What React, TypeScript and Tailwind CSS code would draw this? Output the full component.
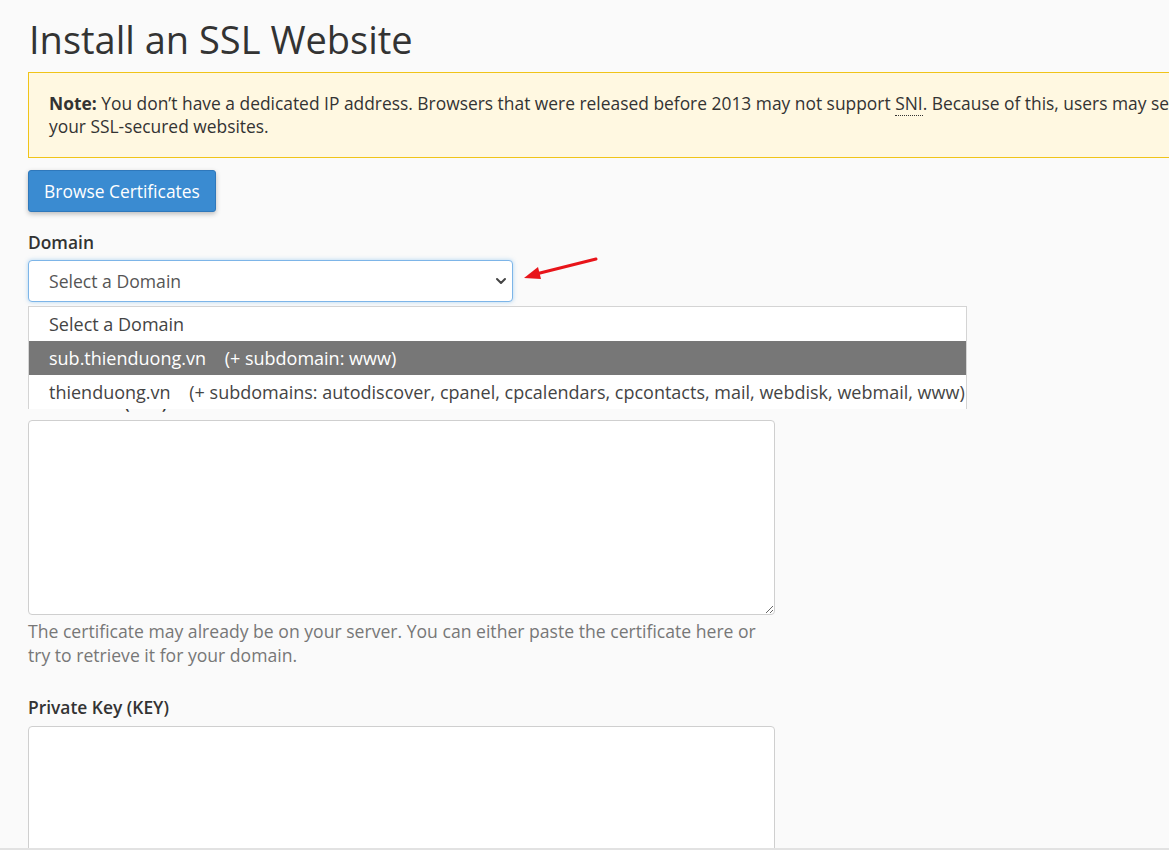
import React from "react";

export default function App() {
  return (
    <div
      className="w-full h-[850px] overflow-hidden bg-[#fafafa] text-[#333] border-b-2 border-[#e2e2e2]"
      style={{ fontFamily: '"Open Sans", "Noto Sans", sans-serif' }}
    >
      <div className="pl-[28px] pt-[14px] w-[1600px]">
        <h1 className="text-[38px] leading-[50px] font-normal text-[#333] pl-px">
          Install an SSL Website
        </h1>
        <div className="mt-[8px] w-[1400px] border border-[#f0c419] bg-[#fff8e1] px-[20px] py-[19px] text-[17.4px] leading-[23px] text-[#333]">
          <div className="whitespace-nowrap">
            <strong className="font-bold">Note:</strong> You don’t have a dedicated IP address. Browsers that were released
            before 2013 may not support{" "}
            <abbr className="no-underline border-b border-dotted border-[#333]" title="Server Name Indication">
              SNI
            </abbr>
            . Because of this, users may see certificate warnings when they access
          </div>
          <div>your SSL-secured websites.</div>
        </div>
        <button className="mt-[12px] h-[42px] w-[188px] rounded-[3px] border border-[#2f78bb] bg-[#3a8bd1] text-[17.4px] text-white shadow-[0_2px_5px_rgba(0,0,0,0.25)]">
          Browse Certificates
        </button>
        <div className="mt-[19px] text-[17.4px] font-semibold leading-[22px]">Domain</div>
        <div className="relative mt-[7px]">
          <div className="flex h-[42px] w-[485px] items-center justify-between rounded-[4px] border border-[#7db5e8] bg-white pl-[20px] pr-[5px] text-[17.6px] text-[#555] shadow-[0_0_4px_rgba(102,175,233,0.5)]">
            <span>Select a Domain</span>
            <svg width="12" height="8" viewBox="0 0 12 8">
              <path d="M2 2 L6 6 L10 2" fill="none" stroke="#444" strokeWidth="2" strokeLinecap="round" strokeLinejoin="round" />
            </svg>
          </div>
          <svg
            className="absolute left-[492px] top-[-4px]"
            width="82"
            height="28"
            viewBox="0 0 82 28"
          >
            <line x1="76" y1="3" x2="16" y2="18" stroke="#e8141a" strokeWidth="3" strokeLinecap="round" />
            <polygon points="4,22 18,11 21,23" fill="#e8141a" />
          </svg>
          <div className="absolute left-0 top-[46px] z-10 w-[939px] h-[103px] overflow-hidden border-x border-t border-[#d4d4d4] bg-white text-[18px] text-[#444]">
            <div className="h-[34px] leading-[34px] pl-[20px]">Select a Domain</div>
            <div className="h-[34px] leading-[34px] pl-[20px] bg-[#777777] text-white whitespace-pre">
              {"sub.thienduong.vn    (+ subdomain: www)"}
            </div>
            <div className="h-[34px] leading-[34px] pl-[20px] whitespace-pre">
              {"thienduong.vn    (+ subdomains: autodiscover, cpanel, cpcalendars, cpcontacts, mail, webdisk, webmail, www)"}
            </div>
          </div>
          <div className="mt-[89px] text-[17.4px] font-semibold leading-[22px]">Certificate: (CRT)</div>
          <textarea className="mt-[7px] block h-[195px] w-[747px] rounded-[4px] border border-[#cfcfcf] bg-white" />
          <p className="mt-[4px] w-[745px] text-[17.6px] leading-[24px] text-[#777]">
            The certificate may already be on your server. You can either paste the certificate here or try to retrieve it
            for your domain.
          </p>
          <div className="mt-[29px] text-[17.4px] font-semibold leading-[22px]">Private Key (KEY)</div>
          <textarea className="mt-[8px] block h-[195px] w-[747px] rounded-[4px] border border-[#cfcfcf] bg-white" />
        </div>
      </div>
    </div>
  );
}
